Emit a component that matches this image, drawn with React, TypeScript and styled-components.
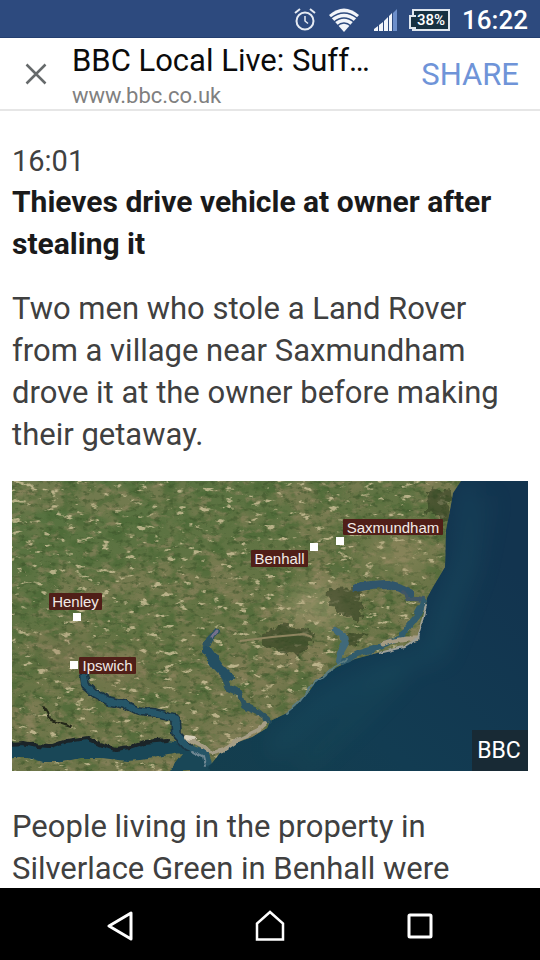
import React from "react";
import styled, { createGlobalStyle } from "styled-components";

const GlobalStyle = createGlobalStyle`
  * { box-sizing: border-box; }
  body {
    margin: 0;
    background: #fff;
    font-family: Roboto, "Liberation Sans", sans-serif;
  }
`;

const Screen = styled.div`
  display: flex;
  flex-direction: column;
  height: 100vh;
  background: #fff;
`;

const StatusBar = styled.div`
  display: flex;
  flex: none;
  align-items: center;
  justify-content: flex-end;
  height: 38px;
  padding: 2px 12px 0;
  background: #2d4a7e;
  border-bottom: 1px solid #243f70;
  color: #fff;
`;

const StatusIcon = styled.svg<{ $gap: number }>`
  display: block;
  flex: none;
  margin-right: ${(p) => p.$gap}px;
`;

const Battery = styled.div`
  display: flex;
  align-items: center;
  justify-content: center;
  width: 38px;
  height: 22px;
  margin: 0 12px 0 4px;
  position: relative;
  border: 2px solid #dfe6ee;
  background: #173142;
  font-size: 15px;
  font-weight: 500;
  line-height: 18px;

  &::before {
    content: "";
    position: absolute;
    left: -5px;
    top: 4px;
    width: 5px;
    height: 10px;
    border: 2px solid #dfe6ee;
    border-right: 0;
    background: #173142;
  }
`;

const Clock = styled.time`
  font-size: 26px;
  font-weight: 500;
  line-height: 36px;
`;

const Header = styled.header`
  display: flex;
  flex: none;
  align-items: center;
  height: 73px;
  border-bottom: 2px solid #e6e6e6;
  background: #fff;
`;

const CloseButton = styled.button`
  display: flex;
  flex: none;
  align-items: center;
  justify-content: center;
  width: 72px;
  height: 70px;
  padding: 0;
  border: 0;
  background: none;
`;

const TitleBlock = styled.div`
  flex: 1;
  min-width: 0;
  padding-top: 4px;
`;

const PageTitle = styled.h1`
  margin: 0;
  overflow: hidden;
  white-space: nowrap;
  color: #0b0b0b;
  font-size: 31px;
  font-weight: 400;
  line-height: 40px;
`;

const PageAddress = styled.div`
  color: #808080;
  font-size: 22px;
  line-height: 30px;
`;

const ShareButton = styled.button`
  flex: none;
  padding: 2px 21px 0;
  border: 0;
  background: none;
  color: #6f94d8;
  font-family: inherit;
  font-size: 31px;
  line-height: 40px;
`;

const Article = styled.main`
  flex: 1;
  min-height: 0;
  overflow: hidden auto;
  scrollbar-width: none;
  padding: 30px 12px 0;
`;

const Posted = styled.time`
  display: block;
  color: #404040;
  font-size: 29px;
  line-height: 40px;
`;

const Headline = styled.h2`
  margin: 0;
  color: #1a1a1a;
  font-size: 30px;
  font-weight: 700;
  line-height: 42px;
`;

const Paragraph = styled.p`
  margin: 23px 0 0;
  color: #404040;
  font-size: 31px;
  line-height: 42px;
`;

const MapFigure = styled.figure`
  margin: 25px 0 35px;
`;

const MapPicture = styled.svg`
  display: block;
  width: 100%;
  height: auto;
`;

const NavBar = styled.nav`
  display: flex;
  flex: none;
  align-items: center;
  justify-content: center;
  gap: 78px;
  height: 72px;
  padding-top: 4px;
  background: #000;
`;

const NavButton = styled.button`
  display: flex;
  align-items: center;
  justify-content: center;
  width: 72px;
  height: 68px;
  padding: 0;
  border: 0;
  background: none;
`;

interface Place {
  name: string;
  box: [number, number, number, number];
  marker: [number, number];
}

const places: Place[] = [
  { name: "Saxmundham", box: [331, 38, 100, 16], marker: [324, 56] },
  { name: "Benhall", box: [239, 69, 57, 17], marker: [298, 62] },
  { name: "Henley", box: [37, 112, 53, 17], marker: [61, 132] },
  { name: "Ipswich", box: [67, 176, 57, 17], marker: [58, 180] },
];

const LAND =
  "M0 0H449L441 12L438 29L434 49L433 86L421 106L415 117L413 132L405 159L391 166L365 172L343 178L325 186L305 199L296 212L285 223L275 232L258 240L255 247L240 256L221 263L208 272L200 282L191 287L180 290H0Z";
const STOUR =
  "M0 264L12 262L25 265L38 266L55 260L75 257L88 263L103 268L118 266L133 260L155 260L172 262L188 268L196 278L198 290H158L171 272L155 274L138 278L115 280L90 277L68 277L50 281L31 281L15 276L0 276Z";

// Each speckle layer keeps only the noise above a threshold and floods it with one colour.
const speckles = [
  { id: "meadow", freq: "0.018 0.024", seed: 5, rgb: [0.55, 0.51, 0.36], gain: 6, cut: -3.0, opacity: 0.5 },
  { id: "grass", freq: "0.06 0.085", seed: 4, rgb: [0.29, 0.41, 0.21], gain: 5, cut: -2.4, opacity: 0.65 },
  { id: "soil", freq: "0.08 0.13", seed: 11, rgb: [0.56, 0.52, 0.38], gain: 5, cut: -2.8, opacity: 0.6 },
  { id: "hedge", freq: "0.14 0.22", seed: 23, rgb: [0.24, 0.33, 0.17], gain: 5, cut: -2.8, opacity: 0.55 },
  { id: "field", freq: "0.08 0.16", seed: 37, rgb: [0.78, 0.74, 0.58], gain: 9, cut: -5.9, opacity: 0.85 },
];

function CoastMap() {
  return (
    <MapPicture viewBox="0 0 516 290" role="img" aria-label="Map of the Suffolk coast">
      <defs>
        <clipPath id="land"><path d={LAND} /></clipPath>
        <linearGradient id="ground" x1="0" y1="0" x2="0.7" y2="1">
          <stop offset="0" stopColor="#53723f" />
          <stop offset="0.5" stopColor="#667445" />
          <stop offset="1" stopColor="#7a7851" />
        </linearGradient>
        <linearGradient id="sea" x1="0.1" y1="0.9" x2="1" y2="0.35">
          <stop offset="0" stopColor="#153f4b" />
          <stop offset="0.5" stopColor="#123c52" />
          <stop offset="1" stopColor="#12344f" />
        </linearGradient>
        <filter id="soft" x="-50%" y="-50%" width="200%" height="200%"><feGaussianBlur stdDeviation="11" /></filter>
        <filter id="edge"><feGaussianBlur stdDeviation="0.6" /></filter>
        <filter id="rough" x="-10%" y="-10%" width="120%" height="120%">
          <feTurbulence type="fractalNoise" baseFrequency="0.12" numOctaves={3} seed={8} result="noise" />
          <feDisplacementMap in="SourceGraphic" in2="noise" scale={14} xChannelSelector="R" yChannelSelector="G" />
          <feGaussianBlur stdDeviation="0.6" />
        </filter>
        <filter id="banks" x="-5%" y="-5%" width="110%" height="110%" colorInterpolationFilters="sRGB">
          <feTurbulence type="fractalNoise" baseFrequency="0.1" numOctaves={2} seed={3} result="noise" />
          <feDisplacementMap in="SourceGraphic" in2="noise" scale={6} xChannelSelector="R" yChannelSelector="G" />
          <feGaussianBlur stdDeviation="0.6" />
        </filter>
        {speckles.map((s) => (
          <filter key={s.id} id={s.id} x="0" y="0" width="100%" height="100%" colorInterpolationFilters="sRGB">
            <feTurbulence type="fractalNoise" baseFrequency={s.freq} numOctaves={4} seed={s.seed} />
            <feColorMatrix
              values={`0 0 0 0 ${s.rgb[0]} 0 0 0 0 ${s.rgb[1]} 0 0 0 0 ${s.rgb[2]} ${s.gain} 0 0 0 ${s.cut}`}
            />
            <feGaussianBlur stdDeviation="0.4" />
          </filter>
        ))}
      </defs>

      <rect width="516" height="290" fill="url(#sea)" />
      <g filter="url(#soft)" opacity="0.3">
        <path d="M455 0L450 80L430 130L422 170L360 195L310 225L260 270" fill="none" stroke="#286673" strokeWidth="12" />
        <path d="M390 190L340 240L290 285" fill="none" stroke="#206062" strokeWidth="10" />
        <path d="M475 15L460 90L425 180" fill="none" stroke="#1d5764" strokeWidth="10" />
      </g>

      <g clipPath="url(#land)">
        <rect width="516" height="290" fill="url(#ground)" />
        {speckles.map((s) => (
          <rect key={s.id} width="516" height="290" filter={`url(#${s.id})`} opacity={s.opacity} />
        ))}
        <g filter="url(#soft)" opacity="0.4">
          <ellipse cx="52" cy="174" rx="25" ry="14" fill="#a08068" />
          <ellipse cx="105" cy="188" rx="32" ry="16" fill="#9a8062" />
          <ellipse cx="220" cy="260" rx="30" ry="10" fill="#b09878" />
          <ellipse cx="305" cy="125" rx="34" ry="22" fill="#b9ab83" />
          <ellipse cx="385" cy="75" rx="38" ry="20" fill="#9d9267" />
        </g>
        <g fill="#303f20" opacity="0.6" filter="url(#rough)">
          <path d="M318 108L345 107L352 124L346 139L330 136L317 124Z" />
          <path d="M252 152L275 142L300 150L298 170L275 174L249 163Z" />
          <path d="M416 10L440 8L437 42L428 36L415 31Z" />
          <path d="M336 153L356 151L342 163L330 166Z" />
        </g>
        <path d="M228 160L260 156L292 153L300 156" fill="none" stroke="#8e8560" strokeWidth="2" />
      </g>

      <g fill="none" strokeLinecap="round" strokeLinejoin="round" filter="url(#banks)">
        <path d={STOUR} fill="#194757" />
        <path d="M-4 263L12 262L25 265L38 266L55 260L75 257L88 263L103 268L118 266L133 261L155 259" stroke="#1b2428" strokeWidth="4" />
        <path d="M32 225L37 232L39 239L50 243L59 246" stroke="#242819" strokeWidth="2" />
        <path d="M72 196L73 204L83 213L96 220L112 223L126 230L143 232L163 237L164 253L176 266" stroke="#1b3442" strokeWidth="10" />
        <path d="M72 196L73 204L83 213L96 220L112 223L126 230L143 232L163 237L164 253L176 266L192 272L196 281" stroke="#265668" strokeWidth="7" />
        <path d="M205 151L195 162L193 169L204 181L212 195L217 207L228 212L232 225L246 231L256 239" stroke="#2c5361" strokeWidth="6" />
        <path d="M195 170L207 187L216 196" stroke="#244f62" strokeWidth="10" />
        <path d="M205 151L201 156" stroke="#75718d" strokeWidth="3" />
        <path d="M344 107L359 104L373 103L388 107L398 112" stroke="#30556b" strokeWidth="8" />
        <path d="M391 111L395 118L403 118L412 119" stroke="#405666" strokeWidth="4" />
        <path d="M412 121L404 136L394 149L389 157L368 166L348 172L330 181" stroke="#315c6d" strokeWidth="6" />
        <path d="M323 149L331 154L333 162L328 171L326 180" stroke="#40697a" strokeWidth="6" />
        <path d="M370 164L382 160L395 158L404 158" stroke="#a59b83" strokeWidth="5" />
        <path d="M414 123L410 140L405 158L392 166L367 172" stroke="#9c9f98" strokeWidth="2" />
        <path d="M335 178L313 193L299 205L288 220L274 232" stroke="#5a7b80" strokeWidth="2" />
        <path d="M174 257L188 264L200 273L211 269L224 260L246 249L254 242" stroke="#a59d85" strokeWidth="4" />
        <path d="M174 256L181 257" stroke="#d8d0bb" strokeWidth="4" />
        <path d="M180 271L191 276L193 284" stroke="#6f8792" strokeWidth="2" />
      </g>

      {places.map((p) => (
        <g key={p.name}>
          <rect x={p.box[0]} y={p.box[1]} width={p.box[2]} height={p.box[3]} rx="1" fill="#501f18" />
          <rect x={p.marker[0]} y={p.marker[1]} width="8" height="8" fill="#fff" />
          <text
            x={p.box[0] + p.box[2] / 2}
            y={p.box[1] + 14}
            textAnchor="middle"
            fill="#f2ebe7"
            fontFamily="'Liberation Sans', sans-serif"
            fontSize="15"
          >
            {p.name}
          </text>
        </g>
      ))}
      <rect x="460" y="249" width="56" height="41" fill="#182a35" />
      <text x="487" y="277" textAnchor="middle" fill="#fff" fontFamily="Roboto, sans-serif" fontSize="23">BBC</text>
    </MapPicture>
  );
}

export default function App() {
  return (
    <>
      <GlobalStyle />
      <Screen>
        <StatusBar>
          <StatusIcon $gap={13} width="22" height="24" viewBox="0 0 22 24" fill="none" stroke="#e6ebf3" strokeWidth="2">
            <circle cx="11" cy="13" r="8.5" />
            <path d="M1 5L6 1M21 5L16 1" />
            <path d="M11 8V13L14 15.5" strokeWidth="1.5" />
          </StatusIcon>
          <StatusIcon $gap={15} width="30" height="24" viewBox="0 0 30 24">
            <path d="M0 7Q15 -6 30 7L15 24Z" fill="#f2f5fa" />
            <path d="M2 10Q15 0 28 10M5 14Q15 6 25 14M8 18Q15 12 22 18" fill="none" stroke="#2d4a7e" strokeWidth="1.5" />
          </StatusIcon>
          <StatusIcon $gap={10} width="24" height="22" viewBox="0 0 24 22">
            <path d="M0 22V20L4 17V22ZM5 22V16L9 13V22ZM10 22V12L14 8V22ZM15 22V7L18 4V22Z" fill="#f2f5fa" />
            <path d="M19 22V4L23 0V22Z" fill="#6d8fcb" />
          </StatusIcon>
          <Battery>38%</Battery>
          <Clock>16:22</Clock>
        </StatusBar>

        <Header>
          <CloseButton aria-label="Close">
            <svg width="22" height="22" viewBox="0 0 22 22" stroke="#666a6b" strokeWidth="2.5">
              <path d="M1.500 1.500L20.500 20.500M20.500 1.500L1.500 20.500" />
            </svg>
          </CloseButton>
          <TitleBlock>
            <PageTitle>BBC Local Live: Suff…</PageTitle>
            <PageAddress>www.bbc.co.uk</PageAddress>
          </TitleBlock>
          <ShareButton>SHARE</ShareButton>
        </Header>

        <Article>
          <Posted>16:01</Posted>
          <Headline>Thieves drive vehicle at owner after stealing it</Headline>
          <Paragraph>
            Two men who stole a Land Rover from a village near Saxmundham drove it at the owner before making their
            getaway.
          </Paragraph>
          <MapFigure>
            <CoastMap />
          </MapFigure>
          <Paragraph>People living in the property in Silverlace Green in Benhall were</Paragraph>
        </Article>

        <NavBar>
          <NavButton aria-label="Back">
            <svg width="26" height="30" viewBox="0 0 26 30" fill="none" stroke="#fff" strokeWidth="3" strokeLinejoin="round">
              <path d="M24 2V28L2 15Z" />
            </svg>
          </NavButton>
          <NavButton aria-label="Home">
            <svg width="30" height="32" viewBox="0 0 30 32" fill="none" stroke="#fff" strokeWidth="2.5">
              <path d="M2 29.500V13.500L15 2L28 13.500V29.500Z" />
            </svg>
          </NavButton>
          <NavButton aria-label="Recent apps">
            <svg width="26" height="26" viewBox="0 0 26 26" fill="none" stroke="#fff" strokeWidth="3">
              <rect x="2" y="2" width="22" height="22" rx="1" />
            </svg>
          </NavButton>
        </NavBar>
      </Screen>
    </>
  );
}
